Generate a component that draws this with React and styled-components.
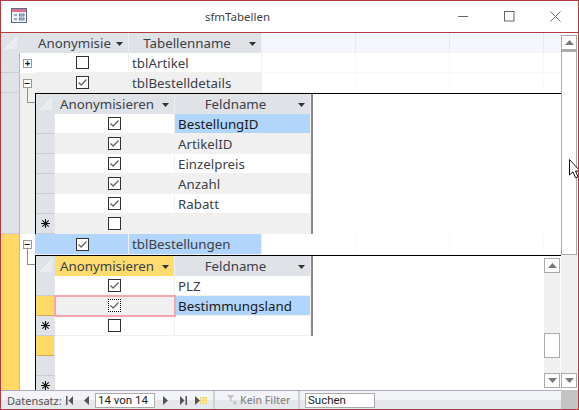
import React from 'react';
import styled, { createGlobalStyle } from 'styled-components';

const GlobalStyle = createGlobalStyle`
    html, body {
        margin: 0;
        padding: 0;
        background: #fff;
    }
    body {
        font-family: "Noto Sans", "Open Sans", sans-serif;
        color: #3c3f48;
    }
`;

const subOne = [
    { name: 'BestellungID', selected: true },
    { name: 'ArtikelID' },
    { name: 'Einzelpreis' },
    { name: 'Anzahl' },
    { name: 'Rabatt' },
];

function Check({ checked, focused }) {
    return (
        <CheckBox $focused={focused}>
            {checked && (
                <svg width="11" height="11" viewBox="0 0 11 11">
                    <path d="M1.5 5.5 L4.2 8 L9.5 2.5" fill="none" stroke="#666" strokeWidth="1.3" />
                </svg>
            )}
        </CheckBox>
    );
}

function Arrow() {
    return (
        <ArrowIcon width="7" height="4" viewBox="0 0 7 4">
            <path d="M0 0 H7 L3.5 4 Z" fill="#333" />
        </ArrowIcon>
    );
}

function Corner() {
    return (
        <CornerIcon width="12" height="12" viewBox="0 0 12 12">
            <path d="M0 12 L12 0 V12 Z" fill="#e9ebef" />
            <path d="M0 12 L12 0" stroke="#f4f5f7" strokeWidth="1" />
        </CornerIcon>
    );
}

function Star() {
    return (
        <svg width="11" height="11" viewBox="0 0 11 11">
            <path d="M5.5 1 V10 M1 5.5 H10 M2.3 2.3 L8.7 8.7 M8.7 2.3 L2.3 8.7" stroke="#111" strokeWidth="1.1" />
        </svg>
    );
}

function Nav({ d, w = 8 }) {
    return (
        <NavIcon width={w} height="9" viewBox={`0 0 ${w} 9`}>
            <path d={d} fill="#555" />
        </NavIcon>
    );
}

function ScrollBar({ children }) {
    return (
        <Bar>
            <BarButton>
                <svg width="9" height="5" viewBox="0 0 9 5"><path d="M4.5 0 L9 5 H0 Z" fill="#7a7a7a" /></svg>
            </BarButton>
            {children}
            <BarButton>
                <svg width="9" height="5" viewBox="0 0 9 5"><path d="M0 0 H9 L4.5 5 Z" fill="#7a7a7a" /></svg>
            </BarButton>
        </Bar>
    );
}

export default function App() {
    return (
        <Window>
            <GlobalStyle />
            <TitleBar>
                <AppIcon width="16" height="16" viewBox="0 0 16 16">
                    <rect x="0.5" y="0.5" width="15" height="14" fill="#eef3fa" stroke="#5a6a88" />
                    <rect x="1" y="1" width="14" height="3" fill="#d9738a" />
                    <path d="M3 7 H6 M3 11 H6" stroke="#4a5a78" strokeWidth="1" />
                    <rect x="8.5" y="6" width="4.5" height="2" fill="#c5d5ea" stroke="#4a5a78" strokeWidth="0.7" />
                    <rect x="8.5" y="10" width="4.5" height="2" fill="#c5d5ea" stroke="#4a5a78" strokeWidth="0.7" />
                </AppIcon>
                <Title>sfmTabellen</Title>
                <WinButton>
                    <svg width="11" height="11" viewBox="0 0 11 11"><path d="M0 5.5 H10" stroke="#666" /></svg>
                </WinButton>
                <WinButton>
                    <svg width="11" height="11" viewBox="0 0 11 11"><rect x="0.5" y="0.5" width="9.5" height="9.5" fill="none" stroke="#666" /></svg>
                </WinButton>
                <WinButton>
                    <svg width="11" height="11" viewBox="0 0 11 11"><path d="M0.5 0.5 L10.5 10.5 M10.5 0.5 L0.5 10.5" stroke="#666" /></svg>
                </WinButton>
            </TitleBar>

            <Body>
                <Sheet>
                    <HeaderRow>
                        <CornerCell $w={34}><Corner /></CornerCell>
                        <HeadCell $w={94}>Anonymisie<Arrow /></HeadCell>
                        <HeadCell $w={133} $center>Tabellenname<Arrow /></HeadCell>
                        <EmptyHead $w={94} />
                        <EmptyHead $w={94} />
                        <EmptyHead $w={94} />
                        <EmptyHead $w={18} />
                    </HeaderRow>

                    <MainRow>
                        <Selector />
                        <Expander><ExpandBox>+</ExpandBox></Expander>
                        <MainCell $w={94} $check><Check /></MainCell>
                        <MainCell $w={133}>tblArtikel</MainCell>
                        <FillCells />
                    </MainRow>

                    <MainRow $alt>
                        <Selector />
                        <Expander $alt $open><ExpandBox>−</ExpandBox></Expander>
                        <MainCell $w={94} $check $alt><Check checked /></MainCell>
                        <MainCell $w={133} $alt>tblBestelldetails</MainCell>
                        <FillCells />
                    </MainRow>

                    <SubRecord $h={141}>
                        <Selector />
                        <Expander $alt $tree />
                        <SubSheet>
                            <SubTable>
                                <SubHeader>
                                    <CornerCell $w={19}><Corner /></CornerCell>
                                    <SubHead $w={120}>Anonymisieren<Arrow /></SubHead>
                                    <SubHead $w={136} $center>Feldname<Arrow /></SubHead>
                                </SubHeader>
                                {subOne.map((row, i) => (
                                    <SubRow key={row.name}>
                                        <SubSelector />
                                        <SubCell $w={120} $check $alt={i % 2 === 1}><Check checked /></SubCell>
                                        <SubCell $w={136} $alt={i % 2 === 1} $selected={row.selected}>{row.name}</SubCell>
                                    </SubRow>
                                ))}
                                <SubRow>
                                    <SubSelector><Star /></SubSelector>
                                    <SubCell $w={120} $check $alt><Check /></SubCell>
                                    <SubCell $w={136} $alt />
                                </SubRow>
                            </SubTable>
                        </SubSheet>
                    </SubRecord>

                    <MainRow $tall>
                        <Selector $active />
                        <Expander $open><ExpandBox>−</ExpandBox></Expander>
                        <MainCell $w={94} $check $selected><Check checked /></MainCell>
                        <MainCell $w={133} $selected>tblBestellungen</MainCell>
                        <FillCells />
                    </MainRow>

                    <SubRecord $grow>
                        <Selector $active />
                        <Expander $tree />
                        <SubSheet>
                            <SubLeft>
                                <SubTable>
                                    <SubHeader>
                                        <CornerCell $w={19}><Corner /></CornerCell>
                                        <SubHead $w={120} $active>Anonymisieren<Arrow /></SubHead>
                                        <SubHead $w={136} $center>Feldname<Arrow /></SubHead>
                                    </SubHeader>
                                    <SubRow>
                                        <SubSelector />
                                        <SubCell $w={120} $check><Check checked /></SubCell>
                                        <SubCell $w={136}>PLZ</SubCell>
                                    </SubRow>
                                    <SubRow>
                                        <SubSelector $active />
                                        <SubCell $w={120} $check $alt $focused><Check checked focused /></SubCell>
                                        <SubCell $w={136} $selected>Bestimmungsland</SubCell>
                                    </SubRow>
                                    <SubRow>
                                        <SubSelector><Star /></SubSelector>
                                        <SubCell $w={120} $check><Check /></SubCell>
                                        <SubCell $w={136} />
                                    </SubRow>
                                </SubTable>
                                <SubSelector $active />
                                <SubSelector />
                                <SubSelector><Star /></SubSelector>
                            </SubLeft>
                            <ScrollBar>
                                <InnerTrack><InnerThumb /></InnerTrack>
                            </ScrollBar>
                        </SubSheet>
                    </SubRecord>
                </Sheet>

                <OuterColumn>
                    <ScrollBar>
                        <OuterThumb />
                        <OuterTrack />
                    </ScrollBar>
                </OuterColumn>

                <Cursor width="11" height="20" viewBox="0 0 11 20">
                    <path d="M0.5 0.5 V16 L4 12.8 L6.5 18.8 L9 17.8 L6.5 12 H11 Z" fill="#fff" stroke="#111" strokeWidth="1" />
                </Cursor>
            </Body>

            <NavBar>
                <NavLabel>Datensatz:</NavLabel>
                <NavButtons>
                    <Nav w={7} d="M0 0 H1.5 V9 H0 Z M7 0 V9 L2.5 4.5 Z" />
                </NavButtons>
                <NavButtons>
                    <Nav w={5} d="M5 0 V9 L0 4.5 Z" />
                </NavButtons>
                <RecordInput>14 von 14</RecordInput>
                <NavButtons $w={21}>
                    <Nav w={5} d="M0 0 V9 L5 4.5 Z" />
                </NavButtons>
                <NavButtons $w={15}>
                    <Nav w={7} d="M0 0 V9 L4.5 4.5 Z M5.5 0 H7 V9 H5.5 Z" />
                </NavButtons>
                <NewRecord>
                    <Nav w={5} d="M0 0 V9 L5 4.5 Z" />
                    <svg width="7" height="7" viewBox="0 0 7 7">
                        <path d="M0 0 H7 V7 H0 Z" fill="#f0cf55" />
                        <path d="M2 0 V7 M5 0 V7 M0 2 H7 M0 5 H7" stroke="#fbeeb0" />
                    </svg>
                </NewRecord>
                <FilterBox>
                    <svg width="10" height="10" viewBox="0 0 10 10">
                        <path d="M0 0 H7 L4.5 3.5 V7 L3 6 V3.5 Z" fill="#c4c4c4" />
                        <path d="M6 6 L9.5 9.5 M9.5 6 L6 9.5" stroke="#aaa" />
                    </svg>
                    Kein Filter
                </FilterBox>
                <SearchBox>Suchen</SearchBox>
                <Grip />
            </NavBar>
        </Window>
    );
}

function FillCells() {
    return (
        <>
            <BlankCell $w={94} />
            <BlankCell $w={94} />
            <BlankCell $w={94} />
            <BlankCell $w={18} />
        </>
    );
}

const Window = styled.div`
    position: relative;
    width: 579px;
    height: 410px;
    box-sizing: border-box;
    border: 1px solid #b23b40;
    display: flex;
    flex-direction: column;
    overflow: hidden;
    background: #fff;
`;

const TitleBar = styled.div`
    height: 31px;
    flex: none;
    display: flex;
    align-items: center;
    padding-left: 10px;
    border-bottom: 1px solid #b23b40;
`;

const AppIcon = styled.svg`
    flex: none;
    margin-top: -1px;
`;

const Title = styled.div`
    flex: 1;
    text-align: center;
    font-size: 11.5px;
    color: #444;
    padding-left: 8px;
`;

const WinButton = styled.div`
    width: 46px;
    height: 31px;
    flex: none;
    display: flex;
    align-items: center;
    justify-content: center;
`;

const Body = styled.div`
    flex: 1;
    min-height: 0;
    display: flex;
`;

const Sheet = styled.div`
    width: 560px;
    flex: none;
    display: flex;
    flex-direction: column;
    overflow: hidden;
`;

const HeaderRow = styled.div`
    display: flex;
    height: 20px;
    flex: none;
`;

const CornerCell = styled.div`
    width: ${p => p.$w}px;
    flex: none;
    box-sizing: border-box;
    background: #dfe2e7;
    padding: 4px 0 0 4px;
`;

const CornerIcon = styled.svg`
    display: block;
`;

const HeadCell = styled.div`
    position: relative;
    width: ${p => p.$w}px;
    flex: none;
    box-sizing: border-box;
    background: #dfe2e7;
    border-right: 1px solid #eceef1;
    font-size: 13.3px;
    line-height: 20px;
    padding-left: ${p => (p.$center ? '0' : '3px')};
    white-space: nowrap;
    text-align: ${p => (p.$center ? 'center' : 'left')};
    padding-right: ${p => (p.$center ? '16px' : '0')};
    overflow: hidden;
`;

const ArrowIcon = styled.svg`
    position: absolute;
    right: 5px;
    top: 9px;
`;

const EmptyHead = styled.div`
    width: ${p => p.$w}px;
    flex: none;
    box-sizing: border-box;
    background: #f5f6fd;
    border-right: 1px solid #e8e9ee;
`;

const MainRow = styled.div`
    display: flex;
    height: ${p => (p.$tall ? '21px' : '20px')};
    flex: none;
`;

const Selector = styled.div`
    width: 19px;
    flex: none;
    box-sizing: border-box;
    background: ${p => (p.$active ? '#ffd966' : '#dfe2e7')};
    border-bottom: ${p => (p.$active ? 'none' : '1px solid #c9ccd2')};
    border-right: 1px solid #b9bcc2;
`;

const Expander = styled.div`
    position: relative;
    width: 15px;
    flex: none;
    box-sizing: border-box;
    background: ${p => (p.$alt ? '#f0f0f0' : '#fff')};
    padding: 6px 0 0 3px;

    ${p => p.$open && `
        &::after {
            content: '';
            position: absolute;
            left: 7px;
            top: 15px;
            bottom: 0;
            border-left: 1px solid #8f8f8f;
        }
    `}

    ${p => p.$tree && `
        &::after {
            content: '';
            position: absolute;
            left: 7px;
            top: 0;
            width: 7px;
            height: 9px;
            border-left: 1px solid #8f8f8f;
            border-bottom: 1px solid #8f8f8f;
        }
    `}
`;

const ExpandBox = styled.div`
    width: 9px;
    height: 9px;
    box-sizing: border-box;
    border: 1px solid #9a9a9a;
    background: #fff;
    color: #111;
    font-size: 10px;
    font-weight: 700;
    line-height: 7px;
    text-align: center;
`;

const MainCell = styled.div`
    width: ${p => p.$w}px;
    flex: none;
    box-sizing: border-box;
    display: flex;
    align-items: center;
    justify-content: ${p => (p.$check ? 'center' : 'flex-start')};
    padding-left: ${p => (p.$check ? '2px' : '3px')};
    background: ${p => (p.$selected ? '#b1d5fb' : p.$alt ? '#f0f0f0' : '#fff')};
    border-right: 1px solid #f2f0ea;
    border-bottom: 1px solid #f2f0ea;
    font-size: 13.3px;
    white-space: nowrap;
`;

const BlankCell = styled.div`
    width: ${p => p.$w}px;
    flex: none;
    box-sizing: border-box;
    border-right: 1px solid #f9f9f7;
    border-bottom: 1px solid #f9f9f7;
`;

const CheckBox = styled.div`
    width: 13px;
    height: 13px;
    box-sizing: border-box;
    border: ${p => (p.$focused ? '1.5px dotted #000' : '1px solid #333')};
    background: #fff;
    display: flex;
    align-items: center;
    justify-content: center;

    svg {
        flex: none;
    }
`;

const SubRecord = styled.div`
    display: flex;
    flex: ${p => (p.$grow ? '1' : 'none')};
    min-height: 0;
    height: ${p => (p.$h ? `${p.$h}px` : 'auto')};
`;

const SubSheet = styled.div`
    flex: 1;
    min-width: 0;
    display: flex;
    justify-content: space-between;
    border-top: 1px solid #000;
    border-left: 1px solid #000;
    overflow: hidden;
`;

const SubLeft = styled.div`
    display: flex;
    flex-direction: column;
`;

const SubTable = styled.div`
    width: 277px;
    box-sizing: border-box;
    border-right: 2px solid #8b8b8b;
    align-self: flex-start;
`;

const SubHeader = styled.div`
    display: flex;
    height: 20px;
`;

const SubHead = styled(HeadCell)`
    background: ${p => (p.$active ? '#fedc70' : '#dfe2e7')};
    padding-left: ${p => (p.$center ? '0' : '5px')};
    padding-right: ${p => (p.$center ? '14px' : '0')};
`;

const SubRow = styled.div`
    display: flex;
    height: 20px;
`;

const SubSelector = styled.div`
    width: 19px;
    height: 20px;
    flex: none;
    box-sizing: border-box;
    background: ${p => (p.$active ? '#ffd966' : '#dfe2e7')};
    border-bottom: 1px solid ${p => (p.$active ? '#c9ad55' : '#c9ccd2')};
    border-right: 1px solid #e6e6e6;
    display: flex;
    align-items: center;
    justify-content: center;
`;

const SubCell = styled.div`
    position: relative;
    width: ${p => p.$w}px;
    flex: none;
    box-sizing: border-box;
    display: flex;
    align-items: center;
    justify-content: ${p => (p.$check ? 'center' : 'flex-start')};
    padding-left: ${p => (p.$check ? '0' : '3px')};
    background: ${p => (p.$selected ? '#b1d5fb' : p.$alt ? '#f0f0f0' : '#fff')};
    border-right: 1px solid #f2f0ea;
    border-bottom: 1px solid #f2f0ea;
    font-size: 13.3px;
    white-space: nowrap;
    color: ${p => (p.$selected ? '#1a1a1a' : '#3c3f48')};
    ${p => p.$focused && `
        z-index: 1;
        outline: 2px solid #f6a5ac;
        outline-offset: -1px;
    `}
`;

const Bar = styled.div`
    width: 16px;
    flex: none;
    margin-right: 1px;
    display: flex;
    flex-direction: column;
    padding: 2px 0 2px;
    box-sizing: border-box;
`;

const BarButton = styled.div`
    height: 15px;
    flex: none;
    box-sizing: border-box;
    border: 1px solid #ababab;
    background: #fff;
    display: flex;
    align-items: center;
    justify-content: center;
`;

const InnerTrack = styled.div`
    flex: 1;
    background: #f0f0f0;
    display: flex;
    flex-direction: column;
    justify-content: flex-end;
    padding-bottom: 15px;
`;

const InnerThumb = styled.div`
    height: 25px;
    box-sizing: border-box;
    border: 1px solid #ababab;
    background: #fff;
`;

const OuterColumn = styled.div`
    flex: 1;
    display: flex;
    justify-content: flex-end;
`;

const OuterThumb = styled.div`
    height: 205px;
    flex: none;
    box-sizing: border-box;
    border: 1px solid #ababab;
    border-top: 2px solid #ababab;
    background: #fff;
`;

const OuterTrack = styled.div`
    flex: 1;
    background: #f0f0f0;
`;

const Cursor = styled.svg`
    position: absolute;
    left: 568px;
    top: 158px;
`;

const NavBar = styled.div`
    height: 19px;
    flex: none;
    box-sizing: border-box;
    display: flex;
    align-items: center;
    border-top: 1px solid #a9aabb;
    background: linear-gradient(180deg, #f3f4f7 50%, #e6e7eb 50%);
    padding-left: 6px;
`;

const NavLabel = styled.div`
    width: 54px;
    flex: none;
    font-size: 11px;
    color: #555;
`;

const NavButtons = styled.div`
    width: ${p => p.$w || 17}px;
    flex: none;
    display: flex;
    align-items: center;
    justify-content: center;
`;

const NavIcon = styled.svg`
    display: block;
`;

const RecordInput = styled.div`
    width: 60px;
    height: 15px;
    flex: none;
    box-sizing: border-box;
    border: 1px solid #ababab;
    background: #fff;
    font-family: Roboto, sans-serif;
    font-size: 11.5px;
    line-height: 13px;
    padding-left: 2px;
    color: #222;
`;

const NewRecord = styled.div`
    width: 22px;
    flex: none;
    box-sizing: border-box;
    padding-left: 4px;
    display: flex;
    align-items: center;
    gap: 0;
`;

const FilterBox = styled.div`
    width: 87px;
    height: 18px;
    flex: none;
    box-sizing: border-box;
    display: flex;
    align-items: center;
    gap: 3px;
    padding-left: 12px;
    border-left: 2px solid #cfd0d8;
    border-right: 2px solid #cfd0d8;
    font-size: 10.5px;
    color: #888;
    font-weight: 500;
`;

const SearchBox = styled.div`
    width: 70px;
    height: 15px;
    flex: none;
    box-sizing: border-box;
    margin-left: 5px;
    border: 1px solid #ababab;
    background: #fff;
    font-family: Roboto, sans-serif;
    font-size: 11.5px;
    line-height: 13px;
    padding-left: 2px;
    color: #222;
`;

const Grip = styled.div`
    margin-left: auto;
    align-self: flex-start;
    margin-top: -1px;
    width: 17px;
    height: 19px;
    flex: none;
    background: #c4c4c4;
`;
